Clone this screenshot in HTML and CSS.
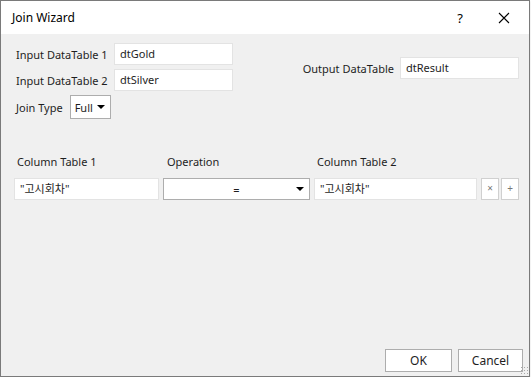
FILE: index.html
```html
<!DOCTYPE html>
<html lang="en">
<head>
    <meta charset="UTF-8">
    <title>Join Wizard</title>
    <link rel="stylesheet" href="styles.css">
</head>
<body>
    <div class="window">
        <div class="titlebar">
            <span class="title">Join Wizard</span>
            <span class="help">?</span>
            <svg class="close" width="12" height="12" viewBox="0 0 12 12">
                <path d="M1 1 L11 11 M11 1 L1 11" stroke="#000" stroke-width="1.1"/>
            </svg>
        </div>
        <div class="content">
            <div class="top">
                <div class="inputs">
                    <div class="field">
                        <label>Input DataTable 1</label>
                        <div class="box">dtGold</div>
                    </div>
                    <div class="field">
                        <label>Input DataTable 2</label>
                        <div class="box">dtSilver</div>
                    </div>
                    <div class="field join">
                        <label>Join Type</label>
                        <div class="combo small">Full <span class="arrow"></span></div>
                    </div>
                </div>
                <div class="field output">
                    <label>Output DataTable</label>
                    <div class="box">dtResult</div>
                </div>
            </div>
            <div class="headers">
                <span class="h1">Column Table 1</span>
                <span class="h2">Operation</span>
                <span class="h3">Column Table 2</span>
            </div>
            <div class="row">
                <div class="box col1">"고시회차"</div>
                <div class="combo op"><span class="eq">=</span><span class="arrow"></span></div>
                <div class="box col2">"고시회차"</div>
                <div class="mini">&times;</div>
                <div class="mini">+</div>
            </div>
            <div class="spacer"></div>
            <div class="footer">
                <div class="btn ok">OK</div>
                <div class="btn">Cancel</div>
                <span class="grip"></span>
            </div>
        </div>
    </div>
</body>
</html>
```

FILE: styles.css
```css
body {
    margin: 0;
    background: #ffffff;
    font-family: "Noto Sans", "Noto Sans CJK KR", sans-serif;
    font-size: 11px;
    color: #1e1e1e;
}
.window {
    width: 528px;
    height: 375px;
    border: 1px solid #7a7a7a;
    display: flex;
    flex-direction: column;
    background: #f0f0f0;
    box-shadow: 0 1px 2px rgba(0, 0, 0, 0.15);
}
.titlebar {
    height: 33px;
    background: #fff;
    display: flex;
    align-items: center;
    padding: 0 0 0 11px;
}
.title {
    flex: 1;
    font-size: 12px;
    color: #000;
}
.help {
    font-size: 13px;
    color: #000;
    margin-right: 35px;
}
.close {
    margin-right: 19px;
}
.content {
    flex: 1;
    display: flex;
    flex-direction: column;
    padding: 9px 10px 4px 13px;
}
.top {
    display: flex;
    justify-content: space-between;
}
.inputs {
    display: flex;
    flex-direction: column;
    gap: 4px;
}
.field {
    display: flex;
    align-items: center;
}
.field label {
    width: 98px;
    padding-left: 2px;
}
.join label {
    width: auto;
    margin-right: 7px;
}
.box {
    background: #fff;
    border: 1px solid #e3e3e3;
    height: 20px;
    line-height: 20px;
    padding: 0 5px;
    box-sizing: border-box;
    width: 119px;
    flex-shrink: 0;
}
.field .box {
    height: 22px;
    line-height: 20px;
}
.output {
    margin-top: 14px;
    align-self: flex-start;
}
.output label {
    width: auto;
    margin-right: 6px;
}
.combo {
    background: #fff;
    border: 1px solid #adadad;
    box-sizing: border-box;
    display: flex;
    align-items: center;
    flex-shrink: 0;
}
.small {
    height: 24px;
    width: 41px;
    padding: 0 5px 0 4px;
    justify-content: space-between;
}
.arrow {
    width: 0;
    height: 0;
    border-left: 4px solid transparent;
    border-right: 4px solid transparent;
    border-top: 4px solid #000;
}
.headers {
    display: flex;
    margin-top: 35px;
    padding-left: 3px;
    height: 16px;
    line-height: 16px;
}
.h1 { width: 150px; }
.h2 { width: 150px; }
.row {
    display: flex;
    align-items: center;
    margin-top: 8px;
    gap: 4px;
}
.row .box {
    height: 22px;
    line-height: 20px;
}
.col1 { width: 145px; }
.col2 { width: 163px; }
.op {
    width: 147px;
    height: 22px;
    border-color: #adadad;
    position: relative;
    justify-content: flex-end;
    padding-right: 5px;
}
.eq {
    position: absolute;
    left: 0;
    right: 0;
    text-align: center;
}
.mini {
    width: 19px;
    height: 22px;
    box-sizing: border-box;
    background: #fff;
    border: 1px solid #d0d0d0;
    text-align: center;
    line-height: 19px;
    font-size: 10px;
    color: #777;
}
.mini + .mini {
    margin-left: -2px;
}
.spacer {
    flex: 1;
}
.footer {
    display: flex;
    justify-content: flex-end;
    gap: 6px;
    margin-right: -4px;
    position: relative;
}
.btn {
    width: 65px;
    height: 23px;
    box-sizing: border-box;
    border: 1px solid #adadad;
    background: #fff;
    text-align: center;
    line-height: 21px;
    font-size: 12px;
}
.btn.ok {
    width: 67px;
}
.grip {
    position: absolute;
    right: -5px;
    bottom: -2px;
    width: 8px;
    height: 8px;
    background: radial-gradient(circle, #a8a8a8 40%, transparent 45%) 0 0 / 3px 3px;
}
```
